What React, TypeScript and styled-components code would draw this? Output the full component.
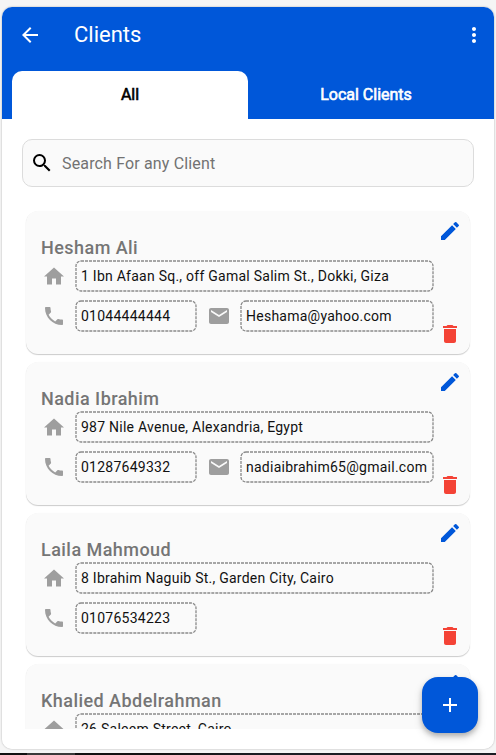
import React from 'react';
import styled, { createGlobalStyle } from 'styled-components';
import {
  MdAdd,
  MdArrowBack,
  MdDelete,
  MdEdit,
  MdEmail,
  MdHome,
  MdMoreVert,
  MdPhone,
  MdSearch,
} from 'react-icons/md';

const BLUE = '#0057d9';

const GlobalStyle = createGlobalStyle`
  * { box-sizing: border-box; }
  body {
    margin: 0;
    background: #f5f5f5;
    font-family: Roboto, sans-serif;
    overflow: hidden;
  }
  button { font: inherit; border: 0; padding: 0; background: none; }
  svg { display: block; flex: none; }
`;

const Page = styled.div`
  height: 755px;
  padding: 7px 2px 0;
  display: flex;
  flex-direction: column;
`;

const Screen = styled.main`
  position: relative;
  height: 742px;
  display: flex;
  flex-direction: column;
  overflow: hidden;
  border-radius: 10px;
  background: #fff;
`;

const Shell = styled.div`
  border-radius: 10px;
  box-shadow: 0 0 2px rgba(0, 0, 0, 0.32);
`;

const BottomStrip = styled.div`
  margin: 4px -2px 0;
  height: 2px;
  background: linear-gradient(90deg, #111 0 27px, #3a3a3a 27px 75px, #111 75px 160px, #1b1d23 260px);
`;

const Header = styled.header`
  height: 112px;
  flex: none;
  display: flex;
  flex-direction: column;
  justify-content: space-between;
  background: ${BLUE};
  color: #fff;
`;

const AppBar = styled.div`
  height: 56px;
  display: flex;
  align-items: center;
  padding: 0 8px 0 16px;
`;

const Title = styled.h1`
  flex: 1;
  margin: 0 0 0 32px;
  font-size: 22px;
  line-height: 28px;
  font-weight: 400;
`;

const Tabs = styled.div`
  height: 48px;
  display: grid;
  grid-template-columns: 1fr 1fr;
  padding: 0 10px;
`;

const Tab = styled.button<{ $active?: boolean }>`
  padding-bottom: 2px;
  border-radius: 10px 10px 0 0;
  background: ${(p) => (p.$active ? '#fff' : 'transparent')};
  color: ${(p) => (p.$active ? '#000' : '#fff')};
  font-size: 16px;
  font-weight: 400;
  -webkit-text-stroke: 0.6px currentColor;
`;

const SearchBox = styled.label`
  height: 48px;
  flex: none;
  margin: 20px 20px 0;
  padding: 0 7px;
  display: flex;
  align-items: center;
  gap: 8px;
  border: 1px solid #dcdcdc;
  border-radius: 10px;
  background: #fafafa;
  color: #000;
`;

const SearchInput = styled.input`
  flex: 1;
  border: 0;
  outline: 0;
  padding: 0;
  background: transparent;
  font: 400 16px Roboto, sans-serif;
  letter-spacing: 0.15px;
  &::placeholder { color: #727272; opacity: 1; }
`;

const ClientList = styled.div`
  height: 522px;
  margin-top: 20px;
  padding: 4px 24px 0;
  display: flex;
  flex-direction: column;
  gap: 8px;
  overflow: hidden;
`;

const Card = styled.article`
  height: 143px;
  flex: none;
  display: flex;
  justify-content: space-between;
  padding: 8px 8px 8px 15px;
  border-radius: 12px;
  background: #fafafa;
  box-shadow: 0 1px 1px rgba(0, 0, 0, 0.2), 0 0 1px rgba(0, 0, 0, 0.04);
`;

const Details = styled.div`
  width: 393px;
  padding-top: 17px;
  display: flex;
  flex-direction: column;
`;

const Name = styled.h2`
  margin: 0;
  height: 24px;
  color: #757575;
  font-size: 18px;
  line-height: 24px;
  font-weight: 500;
  letter-spacing: 0.45px;
`;

const InfoRow = styled.div`
  height: 32px;
  margin-bottom: 8px;
  padding-left: 0.5px;
  display: flex;
  align-items: center;
  color: #9e9e9e;
`;

const FieldBox = styled.div<{ $width: number }>`
  position: relative;
  width: ${(p) => p.$width}px;
  height: 32px;
  margin: 0 9.5px;
  padding-left: 6px;
  display: flex;
  align-items: center;
  flex: none;
  color: #111;
  font-size: 14px;
  letter-spacing: 0.25px;
  white-space: nowrap;
`;

const Outline = styled.svg`
  position: absolute;
  inset: 0;
`;

const Actions = styled.div`
  display: flex;
  flex-direction: column;
  justify-content: space-between;
`;

const IconButton = styled.button<{ $color?: string }>`
  display: flex;
  color: ${(p) => p.$color ?? 'inherit'};
`;

const AddButton = styled.button`
  position: absolute;
  right: 16px;
  bottom: 16px;
  width: 56px;
  height: 56px;
  display: flex;
  align-items: center;
  justify-content: center;
  border-radius: 16px;
  background: ${BLUE};
  color: #fff;
  box-shadow: 0 3px 5px rgba(0, 0, 0, 0.22), 0 4px 10px rgba(0, 0, 0, 0.14);
`;

function Field({ width, children }: { width: number; children: string }) {
  return (
    <FieldBox $width={width}>
      <Outline width={width} height={32}>
        <rect
          x="1"
          y="1"
          width={width - 2}
          height="30"
          rx="5"
          fill="none"
          stroke="#8a8a8a"
          strokeWidth="1.3"
          strokeDasharray="3 1"
        />
      </Outline>
      {children}
    </FieldBox>
  );
}

function HomeIcon() {
  return (
    <svg width="24" height="24" viewBox="0 0 24 24" fill="currentColor">
      <path d="M10 20.5v-6h4v6h5v-8h3L12 3.5 2 12.5h3v8z" />
    </svg>
  );
}

interface Client {
  name: string;
  address: string;
  phone: string;
  email?: string;
}

const clients: Client[] = [
  {
    name: 'Hesham Ali',
    address: '1 Ibn Afaan Sq., off Gamal Salim St., Dokki, Giza',
    phone: '01044444444',
    email: 'Heshama@yahoo.com',
  },
  {
    name: 'Nadia Ibrahim',
    address: '987 Nile Avenue, Alexandria, Egypt',
    phone: '01287649332',
    email: 'nadiaibrahim65@gmail.com',
  },
  { name: 'Laila Mahmoud', address: '8 Ibrahim Naguib St., Garden City, Cairo', phone: '01076534223' },
  { name: 'Khalied Abdelrahman', address: '26 Saleem Street, Cairo', phone: '' },
];

function ClientCard({ client }: { client: Client }) {
  return (
    <Card>
      <Details>
        <Name>{client.name}</Name>
        <InfoRow>
          <HomeIcon />
          <Field width={359}>{client.address}</Field>
        </InfoRow>
        {client.phone && (
          <InfoRow>
            <MdPhone size={24} />
            <Field width={122}>{client.phone}</Field>
            {client.email && (
              <>
                <MdEmail size={24} />
                <Field width={194}>{client.email}</Field>
              </>
            )}
          </InfoRow>
        )}
      </Details>
      <Actions>
        <IconButton $color={BLUE} aria-label="Edit client"><MdEdit size={24} /></IconButton>
        <IconButton $color="#f44336" aria-label="Delete client"><MdDelete size={24} /></IconButton>
      </Actions>
    </Card>
  );
}

export default function App() {
  return (
    <Page>
      <GlobalStyle />
      <Shell>
        <Screen>
          <Header>
            <AppBar>
              <IconButton aria-label="Back"><MdArrowBack size={24} /></IconButton>
              <Title>Clients</Title>
              <IconButton aria-label="More"><MdMoreVert size={24} /></IconButton>
            </AppBar>
            <Tabs>
              <Tab $active>All</Tab>
              <Tab>Local Clients</Tab>
            </Tabs>
          </Header>
          <SearchBox>
            <MdSearch size={24} />
            <SearchInput placeholder="Search For any Client" />
          </SearchBox>
          <ClientList>
            {clients.map((c) => (
              <ClientCard key={c.name} client={c} />
            ))}
          </ClientList>
          <AddButton aria-label="Add client"><MdAdd size={24} /></AddButton>
        </Screen>
      </Shell>
      <BottomStrip />
    </Page>
  );
}
